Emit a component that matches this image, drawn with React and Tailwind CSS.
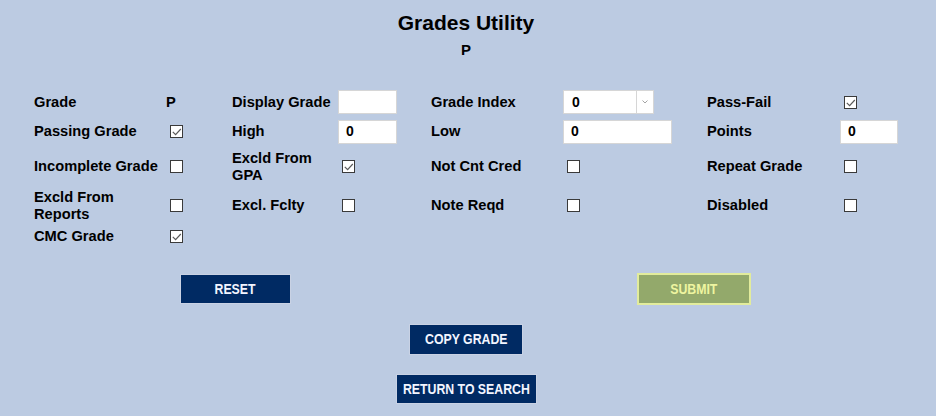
import { useState } from 'react'

const LABEL = 'text-[14.67px] font-bold leading-[17px] text-black'

function Box({ checked }) {
  return (
    <span className="ml-1 flex h-[13px] w-[13px] items-center justify-center border border-[#3a3a3a] bg-white">
      {checked && (
        <svg viewBox="0 0 11 11" className="h-[11px] w-[11px]">
          <path d="M1.8 5.8 L4.6 8.6 L9.8 3" stroke="#5a5a5a" strokeWidth="1.2" fill="none" />
        </svg>
      )}
    </span>
  )
}

function Field({ value, width }) {
  return (
    <div
      className={`flex h-[24px] items-center border border-[#d6d6d6] bg-white pl-[7px] text-[14px] font-bold text-black ${width}`}
    >
      {value}
    </div>
  )
}

function Select({ value }) {
  return (
    <div className="flex h-[24px] w-[91px] items-center border border-[#d6d6d6] bg-white text-[14px] font-bold text-black">
      <span className="flex-1 pl-[8px]">{value}</span>
      <span className="flex h-full w-[17px] items-center justify-center border-l border-[#d6d6d6]">
        <svg viewBox="0 0 6 4" className="h-[4px] w-[6px]">
          <path d="M0.5 0.5 L3 3 L5.5 0.5" stroke="#9a9a9a" strokeWidth="0.9" fill="none" />
        </svg>
      </span>
    </div>
  )
}

function Cell({ children, className = '' }) {
  return <div className={`flex items-center ${className}`}>{children}</div>
}

// narrow caps label: Arial compressed the way Arial Narrow is
function Btn({ children, className }) {
  return (
    <button className={`flex items-center justify-center whitespace-nowrap ${className}`}>
      <span className="inline-block scale-x-[0.82] text-[15px] font-bold">{children}</span>
    </button>
  )
}

export default function App() {
  const [grade] = useState('P')

  return (
    <div className="h-[416px] w-full bg-[#bccbe2] font-['Liberation_Sans',Arial,sans-serif] text-black">
      <div className="w-[932px]">
        <h1 className="pt-[11px] text-center text-[21px] font-bold leading-[24px]">Grades Utility</h1>
        <div className="mt-[6px] text-center text-[15px] font-bold leading-[18px]">{grade}</div>
      </div>

      <div className="mt-[31px] ml-[34px] grid grid-cols-[132px_66px_106px_93px_132px_144px_133px_auto] grid-rows-[24px_25px_35px_33px_19px] gap-y-[5px]">
        {/* row 1 */}
        <Cell className={LABEL}>Grade</Cell>
        <Cell className={LABEL}>{grade}</Cell>
        <Cell className={LABEL}>Display Grade</Cell>
        <Cell><Field value="" width="w-[59px]" /></Cell>
        <Cell className={LABEL}>Grade Index</Cell>
        <Cell><Select value="0" /></Cell>
        <Cell className={LABEL}>Pass-Fail</Cell>
        <Cell><Box checked /></Cell>

        {/* row 2 */}
        <Cell className={LABEL}>Passing Grade</Cell>
        <Cell><Box checked /></Cell>
        <Cell className={LABEL}>High</Cell>
        <Cell><Field value="0" width="w-[59px]" /></Cell>
        <Cell className={LABEL}>Low</Cell>
        <Cell><Field value="0" width="w-[109px]" /></Cell>
        <Cell className={LABEL}>Points</Cell>
        <Cell><Field value="0" width="w-[58px]" /></Cell>

        {/* row 3 */}
        <Cell className={LABEL}>Incomplete Grade</Cell>
        <Cell><Box /></Cell>
        <Cell className={LABEL}>Excld From<br />GPA</Cell>
        <Cell><Box checked /></Cell>
        <Cell className={LABEL}>Not Cnt Cred</Cell>
        <Cell><Box /></Cell>
        <Cell className={LABEL}>Repeat Grade</Cell>
        <Cell><Box /></Cell>

        {/* row 4 */}
        <Cell className={LABEL}>Excld From<br />Reports</Cell>
        <Cell><Box /></Cell>
        <Cell className={LABEL}>Excl. Fclty</Cell>
        <Cell><Box /></Cell>
        <Cell className={LABEL}>Note Reqd</Cell>
        <Cell><Box /></Cell>
        <Cell className={LABEL}>Disabled</Cell>
        <Cell><Box /></Cell>

        {/* row 5 */}
        <Cell className={LABEL}>CMC Grade</Cell>
        <Cell><Box checked /></Cell>
      </div>

      <div className="mt-[27px] flex h-[32px] items-center">
        <Btn className="ml-[180px] h-[30px] w-[111px] border border-[#c9d2e4] bg-[#002a63] text-[#f2f5ff]">RESET</Btn>
        <Btn className="ml-[346px] h-[32px] w-[114px] border-2 border-[#e2ec9c] bg-[#93a96b] text-[#eef5a0]">SUBMIT</Btn>
      </div>

      <div className="mt-[19px] flex w-[932px] flex-col items-center gap-[19px]">
        <Btn className="h-[31px] w-[114px] border border-[#c9d2e4] bg-[#002a63] text-[#f2f5ff]">COPY GRADE</Btn>
        <Btn className="h-[30px] w-[141px] border border-[#c9d2e4] bg-[#002a63] text-[#f2f5ff]">RETURN TO SEARCH</Btn>
      </div>
    </div>
  )
}
